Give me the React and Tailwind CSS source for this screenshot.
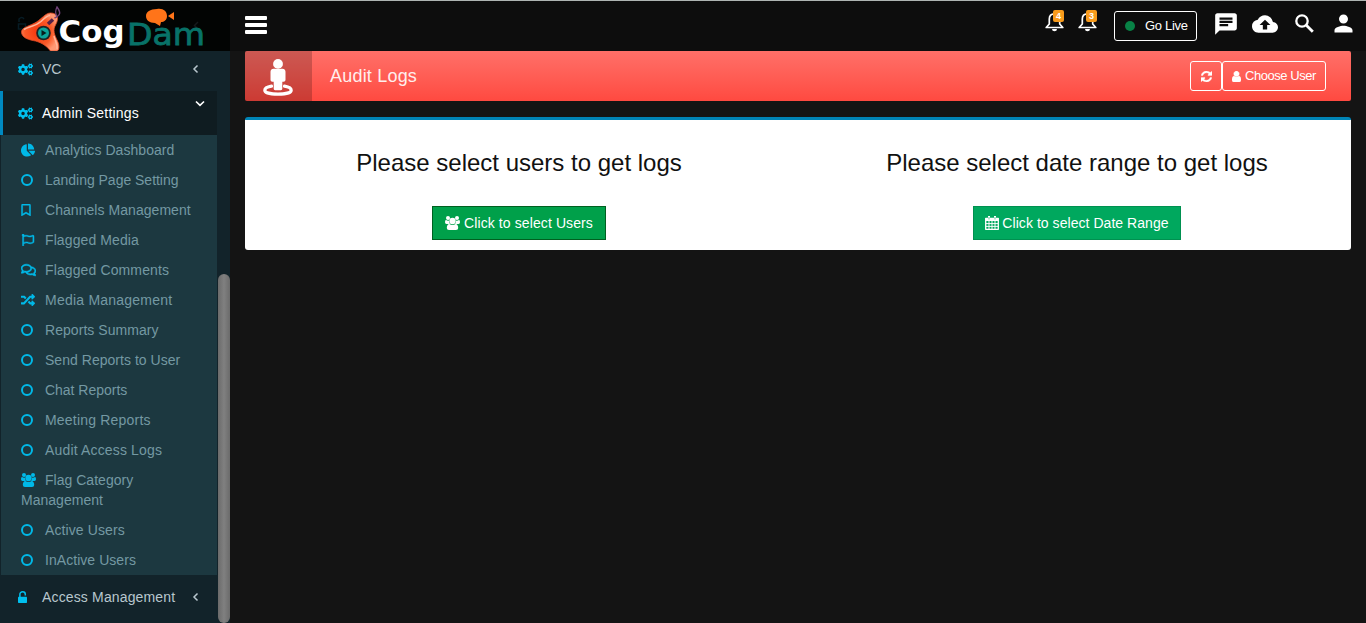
import React from "react";
import { FaCogs, FaChartPie, FaRegBookmark, FaRegFlag, FaRegComments, FaRandom } from "react-icons/fa";
import { MdChat, MdBackup, MdPerson } from "react-icons/md";

const Users = ({ className }) => (
  <svg viewBox="0 0 15 14" className={className} fill="currentColor">
    <circle cx="3" cy="2" r="2" />
    <circle cx="12" cy="2" r="2" />
    <path d="M1 4.100Q3 5.100 4 4.400Q3.800 6.500 5 7.900H1.500Q0 7.900 0 6.300Q0 4.100 1 4.100zM14 4.100Q12 5.100 11 4.400Q11.200 6.500 10 7.900H13.500Q15 7.900 15 6.300Q15 4.100 14 4.100z" />
    <circle cx="7.500" cy="5" r="3.200" />
    <path d="M4.400 7.900Q7.500 10 10.600 7.900Q13.200 8.100 13.200 12Q13.200 14 11 14H4Q1.800 14 1.800 12Q1.800 8.100 4.400 7.900z" />
  </svg>
);

const Refresh = ({ className }) => (
  <svg viewBox="128 128 1536 1536" className={className} fill="currentColor" stroke="currentColor" strokeWidth="50">
    <path d="M1639 1056q0 5-1 7-64 268-268 434.500T892 1664q-146 0-282.500-55T366 1452l-129 129q-19 19-45 19t-45-19-19-45v-448q0-26 19-45t45-19h448q26 0 45 19t19 45-19 45l-137 137q71 66 161 102t187 36q134 0 250-65t186-179q11-17 53-117 8-23 30-23h192q13 0 22.500 9.500t9.500 22.500zm25-800v448q0 26-19 45t-45 19h-448q-26 0-45-19t-19-45 19-45l138-138Q1097 384 896 384q-134 0-250 65T460 628q-11 17-53 117-8 23-30 23H178q-13 0-22.500-9.500T146 736v-7q65-268 270-434.500T896 128q146 0 284 55.500T1425 340l130-129q19-19 45-19t45 19 19 45z" />
  </svg>
);

const User = ({ className }) => (
  <svg viewBox="256 128 1280 1536" className={className} fill="currentColor" stroke="currentColor" strokeWidth="60">
    <path d="M1536 1399q0 109-62.500 187t-150.500 78H469q-88 0-150.500-78T256 1399q0-85 8.500-160.500t31.500-152 58.500-131 94-89T583 832q131 128 313 128t313-128q76 0 134.500 34.500t94 89 58.500 131 31.500 152 8.500 160.500zm-256-887q0 159-112.500 271.500T896 896 624.500 783.500 512 512t112.500-271.500T896 128t271.500 112.500T1280 512z" />
  </svg>
);

const Calendar = ({ className }) => (
  <svg viewBox="0 0 14 14" className={className} fill="none" stroke="currentColor">
    <path d="M0.700 2.500h12.600v10.800H0.700z" strokeWidth="1.300" strokeLinejoin="round" />
    <path d="M0.500 2h13v3H0.500z" fill="currentColor" stroke="none" />
    <path d="M4 5v8M7 5v8M10 5v8M1 7.600h12M1 10.400h12" strokeWidth="0.950" />
    <path d="M4 0v3.500M10 0v3.500" strokeWidth="2" />
    <path d="M4 1v2.500M10 1v2.500" stroke="#00a85e" strokeWidth="0.600" />
  </svg>
);

const StreetView = () => (
  <svg viewBox="0 0 30 37" className="h-[37px] w-[30px]" fill="#fff">
    <path d="M8.500 27.200C4 28 1.800 29.400 1.800 31.200c0 2.500 6 4 13.200 4s13.200-1.500 13.200-4c0-1.800-2.200-3.200-6.700-4" fill="none" stroke="#fff" strokeWidth="3.200" strokeLinecap="round" />
    <circle cx="15" cy="4.900" r="4.900" />
    <path d="M10.500 9.800h9c1.700 0 3 1.300 3 3v8c0 1.200-.800 2-2 2h-1.200v7c0 .8-.600 1.400-1.400 1.400h-5.800c-.8 0-1.400-.600-1.400-1.400v-7H9.500c-1.200 0-2-.800-2-2v-8c0-1.700 1.300-3 3-3z" />
  </svg>
);

const Ring = () => (
  <svg viewBox="0 0 12 12" className="h-3 w-3" fill="none" stroke="currentColor" strokeWidth="2">
    <circle cx="6" cy="6" r="5" />
  </svg>
);

const Unlock = () => (
  <svg viewBox="0 0 9 12" className="h-3 w-[9px]">
    <path d="M1.900 6V3.300a2.700 2.500 0 0 1 5.400 0V4.500" fill="none" stroke="#00c0ef" strokeWidth="1.500" />
    <rect y="5.800" width="9" height="6.200" rx="0.700" fill="#00c0ef" />
  </svg>
);

const AngleLeft = () => (
  <svg viewBox="0 0 7 10" className="h-2.5 w-[7px]" fill="none" stroke="currentColor" strokeWidth="1.500">
    <path d="M5.500 1.500L2 5l3.500 3.500" />
  </svg>
);

const AngleDown = () => (
  <svg viewBox="0 0 10 7" className="mb-5 h-[7px] w-2.5" fill="none" stroke="currentColor" strokeWidth="1.700">
    <path d="M1 1.500l4 3.800 4-3.800" />
  </svg>
);

const SearchIcon = ({ className }) => (
  <svg viewBox="0 0 19 19" className={className} fill="none" stroke="currentColor">
    <circle cx="7" cy="7" r="5.700" strokeWidth="2.300" />
    <path d="M11.300 11.300l6.500 6.500" strokeWidth="2.800" />
  </svg>
);

const Logo = () => (
  <svg width="230" height="50" viewBox="0 1 230 50">
    <defs>
      <radialGradient id="body" cx="45%" cy="50%" r="55%">
        <stop offset="0" stopColor="#f5350c" />
        <stop offset="0.65" stopColor="#fa5a28" />
        <stop offset="1" stopColor="#ff9873" />
      </radialGradient>
    </defs>
    <path d="M19 22v-3q3-3 5 0M18.500 24h7v5h-7z" fill="none" stroke="#071c25" strokeWidth="1.500" />
    <path d="M198 22l-3.500 3.500 3.500 3.500" fill="none" stroke="#15191b" strokeWidth="1.500" />
    <path d="M21.500 32c0-5 9-6 15-10 5-3 9-9 14-9 7 0 9 5 5 12-3 5-1 10 2 16 2 4 2 10-1 10h-6c-4-5-8-8-15-10-6-1-14-3-14-9z" fill="url(#body)" stroke="#e04a25" strokeWidth="0.800" />
    <path d="M24 29.500c5-3 11-3 17-8 3-3 6-6 9-6M54 36c1 5 4 8 3 13" fill="none" stroke="#ffb79c" strokeWidth="1.500" />
    <path d="M48 24l5-4.500" stroke="#522047" strokeWidth="3.500" />
    <path d="M54.500 18c7-3 6-6 2.500-11-2 4-2 6 0 10" fill="none" stroke="#71447a" strokeWidth="1.400" />
    <circle cx="43.500" cy="33" r="7.300" fill="#1c2526" />
    <circle cx="43.500" cy="33" r="5.500" fill="#0da59a" />
    <path d="M41.500 30l5 3-5 3z" fill="#071d1c" />
    <text x="58.500" y="42" fontFamily="DejaVu Sans" fontWeight="700" fontSize="30" textLength="66" lengthAdjust="spacingAndGlyphs" fill="#fff">Cog</text>
    <text x="127" y="45" fontFamily="DejaVu Sans" fontSize="31" textLength="78" lengthAdjust="spacingAndGlyphs" fill="#087268" stroke="#087268" strokeWidth="0.800">Dam</text>
    <path d="M157 9c6-1 10 2 10 7 0 4-3 6-6 6l-1 4-5-3c-6 0-9-3-9-7 0-4 4-7 11-7zM168 16l6-4v8z" fill="#ff7419" />
  </svg>
);

const submenu = [
  { label: "Analytics Dashboard", icon: <FaChartPie className="size-3.5" />, ls: "tracking-[0.05px]" },
  { label: "Landing Page Setting", icon: <Ring />, ls: "tracking-[-0.02px]" },
  { label: "Channels Management", icon: <FaRegBookmark className="h-3 w-2.5 stroke-current stroke-[20]" />, ls: "tracking-[0.05px]" },
  { label: "Flagged Media", icon: <FaRegFlag className="h-3 w-3.5 stroke-current stroke-[20]" />, ls: "tracking-[0.1px]" },
  { label: "Flagged Comments", icon: <FaRegComments className="h-3.5 w-[15px] stroke-current stroke-[20]" />, ls: "tracking-[0.12px]" },
  { label: "Media Management", icon: <FaRandom className="size-3.5" />, ls: "tracking-[0.23px]" },
  { label: "Reports Summary", icon: <Ring />, ls: "tracking-[0.05px]" },
  { label: "Send Reports to User", icon: <Ring />, ls: "tracking-[0.03px]" },
  { label: "Chat Reports", icon: <Ring />, ls: "tracking-[-0.02px]" },
  { label: "Meeting Reports", icon: <Ring />, ls: "tracking-[0.2px]" },
  { label: "Audit Access Logs", icon: <Ring />, ls: "tracking-[0.16px]" },
  { label: "Flag Category Management", icon: <Users className="h-3.5 w-[15px]" />, ls: "tracking-[0.02px]" },
  { label: "Active Users", icon: <Ring />, ls: "tracking-[0.1px]" },
  { label: "InActive Users", icon: <Ring />, ls: "tracking-[0.05px]" },
];

const Bell = ({ count }) => (
  <div className="relative h-[22px] w-[22px]">
    <svg viewBox="0 0 22 22" className="size-[22px]" fill="none" stroke="currentColor" strokeWidth="1.700" strokeLinejoin="round">
      <path d="M2.200 17.500L5.300 14V9Q5.300 3.800 10.500 3.800T15.700 9v5l3.100 3.500z" />
      <path d="M8 19h5q0 2.200-2.500 2.200T8 19z" fill="currentColor" stroke="none" />
    </svg>
    <span className="absolute top-0 left-[9px] flex h-3 w-[11px] items-center justify-center rounded-[2px] bg-[#f89b1c] text-[9px] leading-none font-bold">{count}</span>
  </div>
);

function Sidebar() {
  return (
    <aside className="flex w-[230px] shrink-0 bg-[#12232a] text-sm">
      <nav className="w-[217px]">
        <div className="flex h-10 items-center pr-[18px] pb-1 pl-[18px] text-[#b8c7ce]">
          <FaCogs className="h-[15px] w-[15px] text-[#00c0ef]" />
          <span className="ml-[9px] flex-1">VC</span>
          <AngleLeft />
        </div>
        <div className="flex h-11 items-center border-l-[3px] border-[#0089c1] bg-[#0f1c21] pr-[12px] pl-[15px] text-white">
          <FaCogs className="h-[15px] w-[15px] text-[#00c0ef]" />
          <span className="ml-[9px] flex-1 tracking-[0.2px]">Admin Settings</span>
          <AngleDown />
        </div>
        <ul className="ml-px h-[440px] bg-[#1c3840] text-[#7499a3]">
          {submenu.map((item) => (
            <li key={item.label} className="py-[5px] pr-5 pl-5 leading-5">
              <span className="inline-flex h-5 w-6 items-center align-top text-[#00b9e8]">{item.icon}</span>
              <span className={item.ls}>{item.label}</span>
            </li>
          ))}
        </ul>
        <div className="flex h-11 items-center pr-[18px] pl-[18px] text-[#b8c7ce]">
          <Unlock />
          <span className="ml-[15px] flex-1 tracking-[0.15px]">Access Management</span>
          <AngleLeft />
        </div>
      </nav>
      <div className="ml-px flex w-3 flex-col pt-[223px]">
        <div className="h-[349px] rounded-full bg-linear-to-r from-[#6b6b6b] via-[#808080] to-[#6b6b6b]" />
      </div>
    </aside>
  );
}

export default function App() {
  return (
    <div className="flex h-[623px] w-[1366px] flex-col overflow-hidden bg-[#141414] font-['Liberation_Sans',sans-serif]">
      <header className="flex h-[51px] shrink-0 border-t border-[#aeb4b2] bg-[#0d0d0d] text-white">
        <div className="w-[230px] bg-[#020403]"><Logo /></div>
        <div className="flex flex-1 pr-[9px]">
          <button className="mt-[15px] ml-[15px] flex h-[18px] w-[22px] flex-col justify-between" aria-label="Menu">
            <span className="h-1 w-full rounded-[1px] bg-white" />
            <span className="h-1 w-full rounded-[1px] bg-white" />
            <span className="h-1 w-full rounded-[1px] bg-white" />
          </button>
          <div className="ml-auto flex">
            <div className="mt-[9px] flex gap-[11px]"><Bell count="4" /><Bell count="3" /></div>
            <button className="mt-[10px] ml-[15px] flex h-[30px] w-[83px] items-center rounded-[3px] border border-white pl-[10px] text-[13px] tracking-[-0.3px]">
              <span className="mr-[10px] size-[10px] rounded-full bg-[#088246]" />Go Live
            </button>
            <MdChat className="mt-[10px] ml-[16px] size-[26px]" />
            <MdBackup className="mt-[10px] ml-[13px] size-[26px]" />
            <SearchIcon className="mt-[13px] mr-[3px] ml-[17px] size-[19px]" />
            <MdPerson className="mt-[9px] ml-[13px] size-[27px]" />
          </div>
        </div>
      </header>
      <div className="flex h-[572px]">
        <Sidebar />
        <main className="flex-1 pr-[15px] pl-[15px]">
          <section className="flex h-[50px] items-center overflow-hidden rounded-[2px] bg-linear-to-b from-[#ff6f68] to-[#ff4940] text-white">
            <div className="flex h-full w-[67px] items-center justify-center bg-black/20 pt-[3px] pr-[2px]"><StreetView /></div>
            <h1 className="ml-[18px] text-lg tracking-[0.2px] text-[#ffeeed]">Audit Logs</h1>
            <div className="mr-[25px] ml-auto flex text-[13px]">
              <button className="flex h-[30px] w-8 items-center justify-center rounded-[3px] border border-white" aria-label="Refresh"><Refresh className="size-[11px]" /></button>
              <button className="flex h-[30px] w-[104px] items-center justify-center gap-1 rounded-[3px] border border-white tracking-[-0.45px] whitespace-nowrap"><User className="h-[11px] w-[9px]" />Choose User</button>
            </div>
          </section>
          <section className="mt-4 flex h-[133px] rounded-[3px] border-t-[3px] border-[#0084b6] bg-white text-[#111]">
            <div className="flex w-[548px] flex-col items-center pt-[30px]">
              <h2 className="text-2xl leading-[26px]">Please select users to get logs</h2>
              <button className="mt-[30px] flex h-[34px] w-[174px] items-center justify-center gap-1 border border-[#006020] bg-[#00a04a] text-sm tracking-[0.1px] text-white"><Users className="h-3.5 w-[15px]" />Click to select Users</button>
            </div>
            <div className="flex flex-1 flex-col items-center pt-[30px] pl-[10px]">
              <h2 className="text-2xl leading-[26px]">Please select date range to get logs</h2>
              <button className="mt-[30px] flex h-[34px] w-[208px] items-center justify-center gap-[3px] border border-[#009050] bg-[#00a85e] text-sm tracking-[0.05px] text-white"><Calendar className="h-3.5 w-3.5" />Click to select Date Range</button>
            </div>
          </section>
        </main>
      </div>
    </div>
  );
}
